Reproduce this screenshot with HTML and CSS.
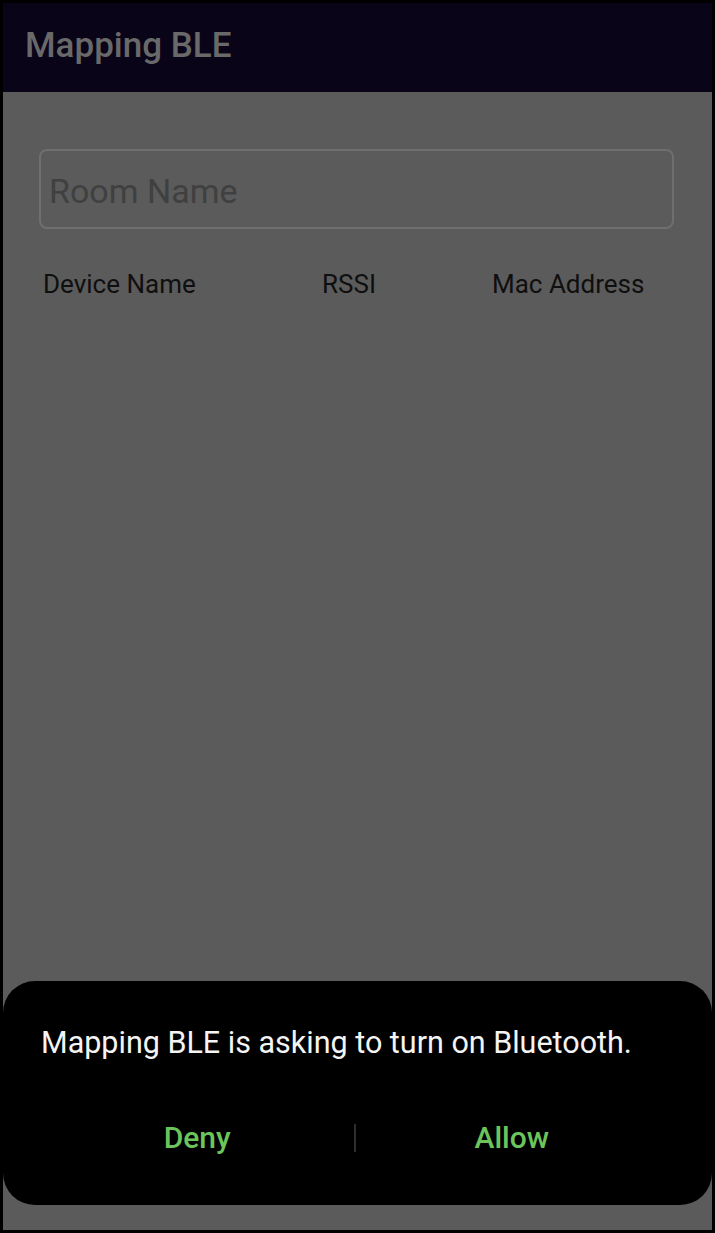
FILE: index.html
```html
<!DOCTYPE html>
<html>
<head>
<meta charset="utf-8">
<link rel="stylesheet" href="styles.css">
</head>
<body>
<div class="screen">
  <header class="appbar">
    <h1 class="title">Mapping BLE</h1>
  </header>
  <main class="content">
    <div class="field"><span class="placeholder">Room Name</span></div>
    <div class="headers">
      <span class="h-device">Device Name</span>
      <span class="h-rssi">RSSI</span>
      <span class="h-mac">Mac Address</span>
    </div>
  </main>
  <div class="dialog">
    <p class="message">Mapping BLE is asking to turn on Bluetooth.</p>
    <div class="actions">
      <button class="btn">Deny</button>
      <span class="divider"></span>
      <button class="btn">Allow</button>
    </div>
  </div>
</div>
</body>
</html>
```
FILE: styles.css
```css
* { box-sizing: border-box; }
html, body { margin: 0; padding: 0; background: #000; }
body { font-family: Roboto, "Noto Sans", sans-serif; }
.screen {
  position: relative;
  width: 715px;
  height: 1233px;
  border: 3px solid #000;
  background: #5b5b5b;
  display: flex;
  flex-direction: column;
  overflow: hidden;
}
.appbar {
  height: 89px;
  background: #0a0419;
  display: flex;
  align-items: center;
  padding-left: 22px;
  flex-shrink: 0;
}
.title {
  margin: 0;
  font-size: 35px;
  font-weight: 500;
  color: #696969;
  margin-top: -5px;
}
.content {
  padding: 57px 38px 0 36px;
}
.field {
  height: 80px;
  border: 2px solid #6f6f6f;
  border-radius: 8px;
  display: flex;
  align-items: center;
  padding-left: 8px;
}
.placeholder {
  font-size: 34px;
  color: #404040;
  margin-top: 4px;
}
.headers {
  display: flex;
  margin-top: 40px;
  font-size: 26px;
  color: #0f0f0f;
  padding-left: 4px;
}
.h-device { width: 279px; }
.h-rssi { width: 170px; }
.dialog {
  position: absolute;
  left: 0;
  right: 0;
  top: 978px;
  height: 224px;
  background: #000;
  border-radius: 32px;
  padding: 44px 44px 0 38px;
}
.message {
  margin: 0;
  color: #f4f4f4;
  font-size: 30.5px;
  white-space: nowrap;
}
.actions {
  display: flex;
  align-items: center;
  margin-top: 60px;
}
.btn {
  flex: 1;
  background: none;
  border: none;
  font-family: Roboto, "Noto Sans", sans-serif;
  font-size: 30px;
  font-weight: 500;
  color: #6cc55b;
  padding: 0;
}
.divider {
  width: 2px;
  height: 28px;
  background: #2e2e2e;
}
```
